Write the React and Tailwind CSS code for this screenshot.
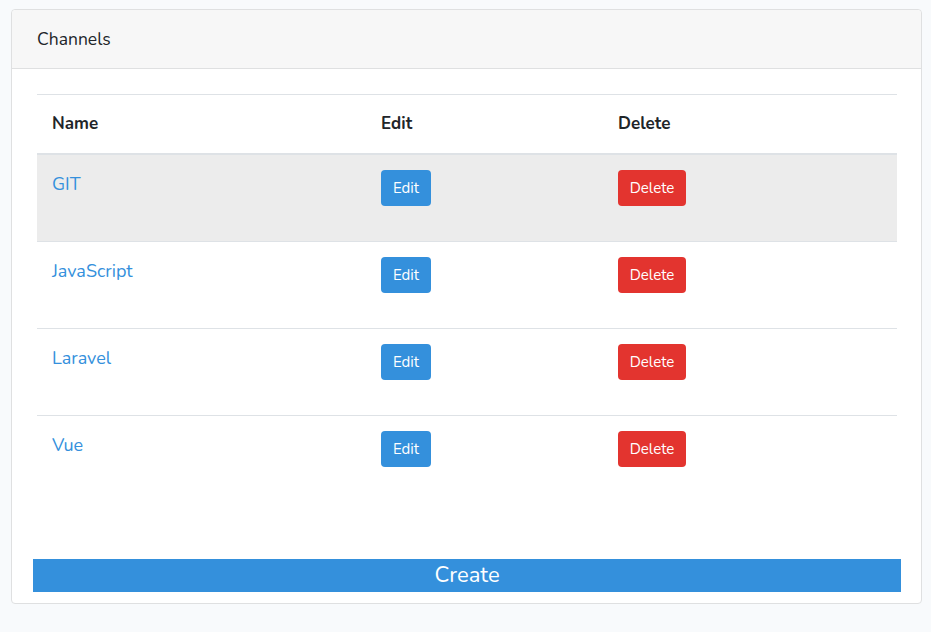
import React from "react";

const rows = ["GIT", "JavaScript", "Laravel", "Vue"];

export default function App() {
  return (
    <div className="min-h-[632px] bg-[#f8fafc] pt-[9px] pl-[11px] pr-[9px] font-['Nunito','Noto_Sans',sans-serif] text-[#212529]">
      <div className="border border-[#dfe0e1] rounded-[4px] bg-white">
        <div className="h-[59px] bg-[#f7f7f7] border-b border-[#dfe0e1] rounded-t-[4px] px-[25px] flex items-center text-[17.5px]">
          Channels
        </div>
        <div className="pt-[25px] pl-[21px] pr-[20px] pb-[11px]">
          <div className="mx-[4px] border-t border-[#dee2e6]">
            <div className="grid grid-cols-[329px_237px_294px] h-[60px] items-center border-b-2 border-[#dee2e6] font-bold text-[17px]">
              <div className="px-[15px]">Name</div>
              <div className="px-[15px]">Edit</div>
              <div className="px-[15px]">Delete</div>
            </div>
            {rows.map((r, i) => (
              <div
                key={r}
                className={
                  "grid grid-cols-[329px_237px_294px] " +
                  (i > 0 ? "h-[87px] border-t border-[#dee2e6]" : "h-[86px] bg-[#ececec]")
                }
              >
                <div className="px-[15px] pt-[18px] text-[18px] text-[#3490dc] leading-[22px]">{r}</div>
                <div className="px-[15px] pt-[15px]">
                  <button className="h-[36px] w-[50px] rounded-[4px] bg-[#3490dc] text-white text-[15px]">Edit</button>
                </div>
                <div className="px-[15px] pt-[15px]">
                  <button className="h-[36px] w-[68px] rounded-[4px] bg-[#e3342f] text-white text-[15px]">Delete</button>
                </div>
              </div>
            ))}
          </div>
          <div className="mt-[57px] h-[33px] bg-[#3490dc] text-white text-[22px] flex items-center justify-center">
            Create
          </div>
        </div>
      </div>
    </div>
  );
}
